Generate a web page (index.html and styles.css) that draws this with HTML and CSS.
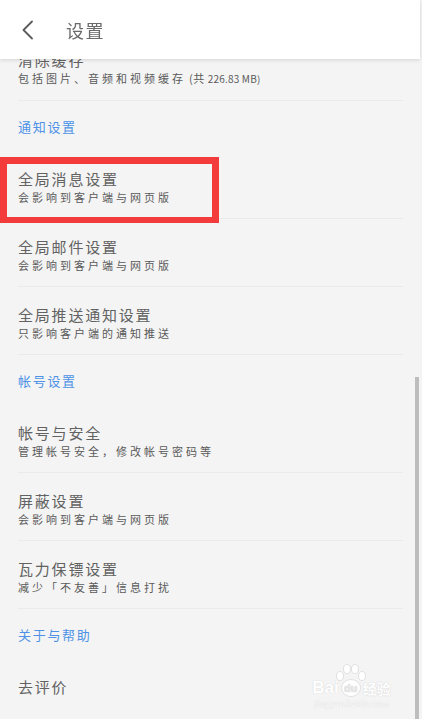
FILE: index.html
```html
<!DOCTYPE html>
<html lang="zh-CN">
<head>
<meta charset="utf-8">
<title>设置</title>
<link rel="stylesheet" href="styles.css">
</head>
<body>
<header class="header">
  <svg class="back" width="14" height="20" viewBox="0 0 14 20"><path d="M11 1.5 L2.5 10 L11 18.5" fill="none" stroke="#5a5a5a" stroke-width="1.8" stroke-linecap="round" stroke-linejoin="round"/></svg>
  <h1 class="title">设置</h1>
</header>

<main class="list">
  <div class="item">
    <div class="item-title">清除缓存</div>
    <div class="item-sub">包括图片、音频和视频缓存<span class="tail"> (共 <span class="latin">226.83 MB)</span></span></div>
  </div>

  <div class="section">通知设置</div>
  <div class="item">
    <div class="item-title">全局消息设置</div>
    <div class="item-sub">会影响到客户端与网页版</div>
    <div class="highlight"></div>
  </div>
  <div class="item">
    <div class="item-title">全局邮件设置</div>
    <div class="item-sub">会影响到客户端与网页版</div>
  </div>
  <div class="item">
    <div class="item-title">全局推送通知设置</div>
    <div class="item-sub">只影响客户端的通知推送</div>
  </div>

  <div class="section">帐号设置</div>
  <div class="item">
    <div class="item-title">帐号与安全</div>
    <div class="item-sub">管理帐号安全，修改帐号密码等</div>
  </div>
  <div class="item">
    <div class="item-title">屏蔽设置</div>
    <div class="item-sub">会影响到客户端与网页版</div>
  </div>
  <div class="item">
    <div class="item-title">瓦力保镖设置</div>
    <div class="item-sub">减少「不友善」信息打扰</div>
  </div>

  <div class="section">关于与帮助</div>
  <div class="item item-single">
    <div class="item-title">去评价</div>
  </div>
</main>

<div class="scrollbar"></div>

<div class="watermark">
  <svg class="paw" width="34" height="26" viewBox="0 0 34 26">
    <g fill="#fff" stroke="#e0e0e0" stroke-width="1">
      <ellipse cx="6" cy="12" rx="3.5" ry="4.5"/>
      <ellipse cx="13" cy="5" rx="3.5" ry="4.5"/>
      <ellipse cx="21" cy="5" rx="3.5" ry="4.5"/>
      <ellipse cx="28" cy="12" rx="3.5" ry="4.5"/>
    </g>
  </svg>
  <div class="wm-row"><span class="wm-bai">Bai</span><span class="wm-du">du</span><span class="wm-cn">经验</span></div>
  <div class="wm-url">jingyan.baidu.com</div>
</div>
</body>
</html>
```

FILE: styles.css
```css
html, body {
  margin: 0;
  padding: 0;
}

body {
  width: 422px;
  min-height: 719px;
  background: #f4f4f4;
  font-family: "Noto Sans CJK SC", "Noto Sans", sans-serif;
  overflow: hidden;
  position: relative;
}

.header {
  position: fixed;
  top: 0;
  left: 0;
  width: 420px;
  height: 59px;
  background: #ffffff;
  box-shadow: 0 1px 4px rgba(0, 0, 0, 0.14);
  display: flex;
  align-items: center;
  z-index: 5;
}

.back {
  margin-left: 21px;
  flex: none;
}

.title {
  margin: 0 0 0 31px;
  font-size: 18px;
  font-weight: 400;
  letter-spacing: 1.5px;
  color: #6a6a6a;
  line-height: 20px;
}

.list {
  padding-top: 32px;
  margin: 0 19px 0 18px;
  display: flex;
  flex-direction: column;
}

.item {
  position: relative;
  padding: 18px 0 13px;
  border-bottom: 1px solid #eaeaea;
}

.item-single {
  padding-bottom: 29px;
}

.item-title {
  font-size: 15px;
  line-height: 20px;
  letter-spacing: 1.8px;
  color: #626262;
}

.item-sub {
  font-size: 11px;
  line-height: 16px;
  letter-spacing: 3px;
  color: #5a5a5a;
}

.tail {
  letter-spacing: 0.5px;
}

.latin {
  font-size: 10px;
  letter-spacing: 0.2px;
}

.section {
  height: 50px;
  box-sizing: border-box;
  padding-top: 17px;
  font-size: 13px;
  line-height: 18px;
  letter-spacing: 1.7px;
  color: #4d92e6;
}

.highlight {
  position: absolute;
  left: -18px;
  top: 6px;
  width: 219px;
  height: 66px;
  box-sizing: border-box;
  border: 7px solid #f33b3b;
  border-bottom-width: 6px;
}

.scrollbar {
  position: absolute;
  left: 415px;
  top: 377px;
  width: 4px;
  height: 342px;
  background: #bdbdbd;
}

.watermark {
  position: absolute;
  left: 304px;
  top: 664px;
  width: 95px;
  display: flex;
  flex-direction: column;
  align-items: center;
  color: #fff;
}

.paw {
  position: absolute;
  left: 30px;
  top: 0;
}

.wm-row {
  margin-top: 14px;
  display: flex;
  align-items: center;
  height: 20px;
  font-family: "Liberation Sans", sans-serif;
  font-weight: 700;
  text-shadow: 0 0 1px #d6d6d6, 0 0 1px #d6d6d6;
}

.wm-bai {
  font-size: 17px;
}

.wm-du {
  font-size: 11px;
  width: 18px;
  height: 16px;
  line-height: 16px;
  text-align: center;
  border-radius: 50%;
  background: #fff;
  border: 1px solid #e0e0e0;
  color: #e8e8e8;
  margin: 0 2px;
}

.wm-cn {
  font-family: "Noto Sans CJK SC", sans-serif;
  font-size: 14px;
}

.wm-url {
  font-family: "Liberation Serif", serif;
  font-size: 10px;
  line-height: 12px;
  color: #fff;
  text-shadow: 0 0 1px #d6d6d6, 0 0 1px #d6d6d6;
}
```
